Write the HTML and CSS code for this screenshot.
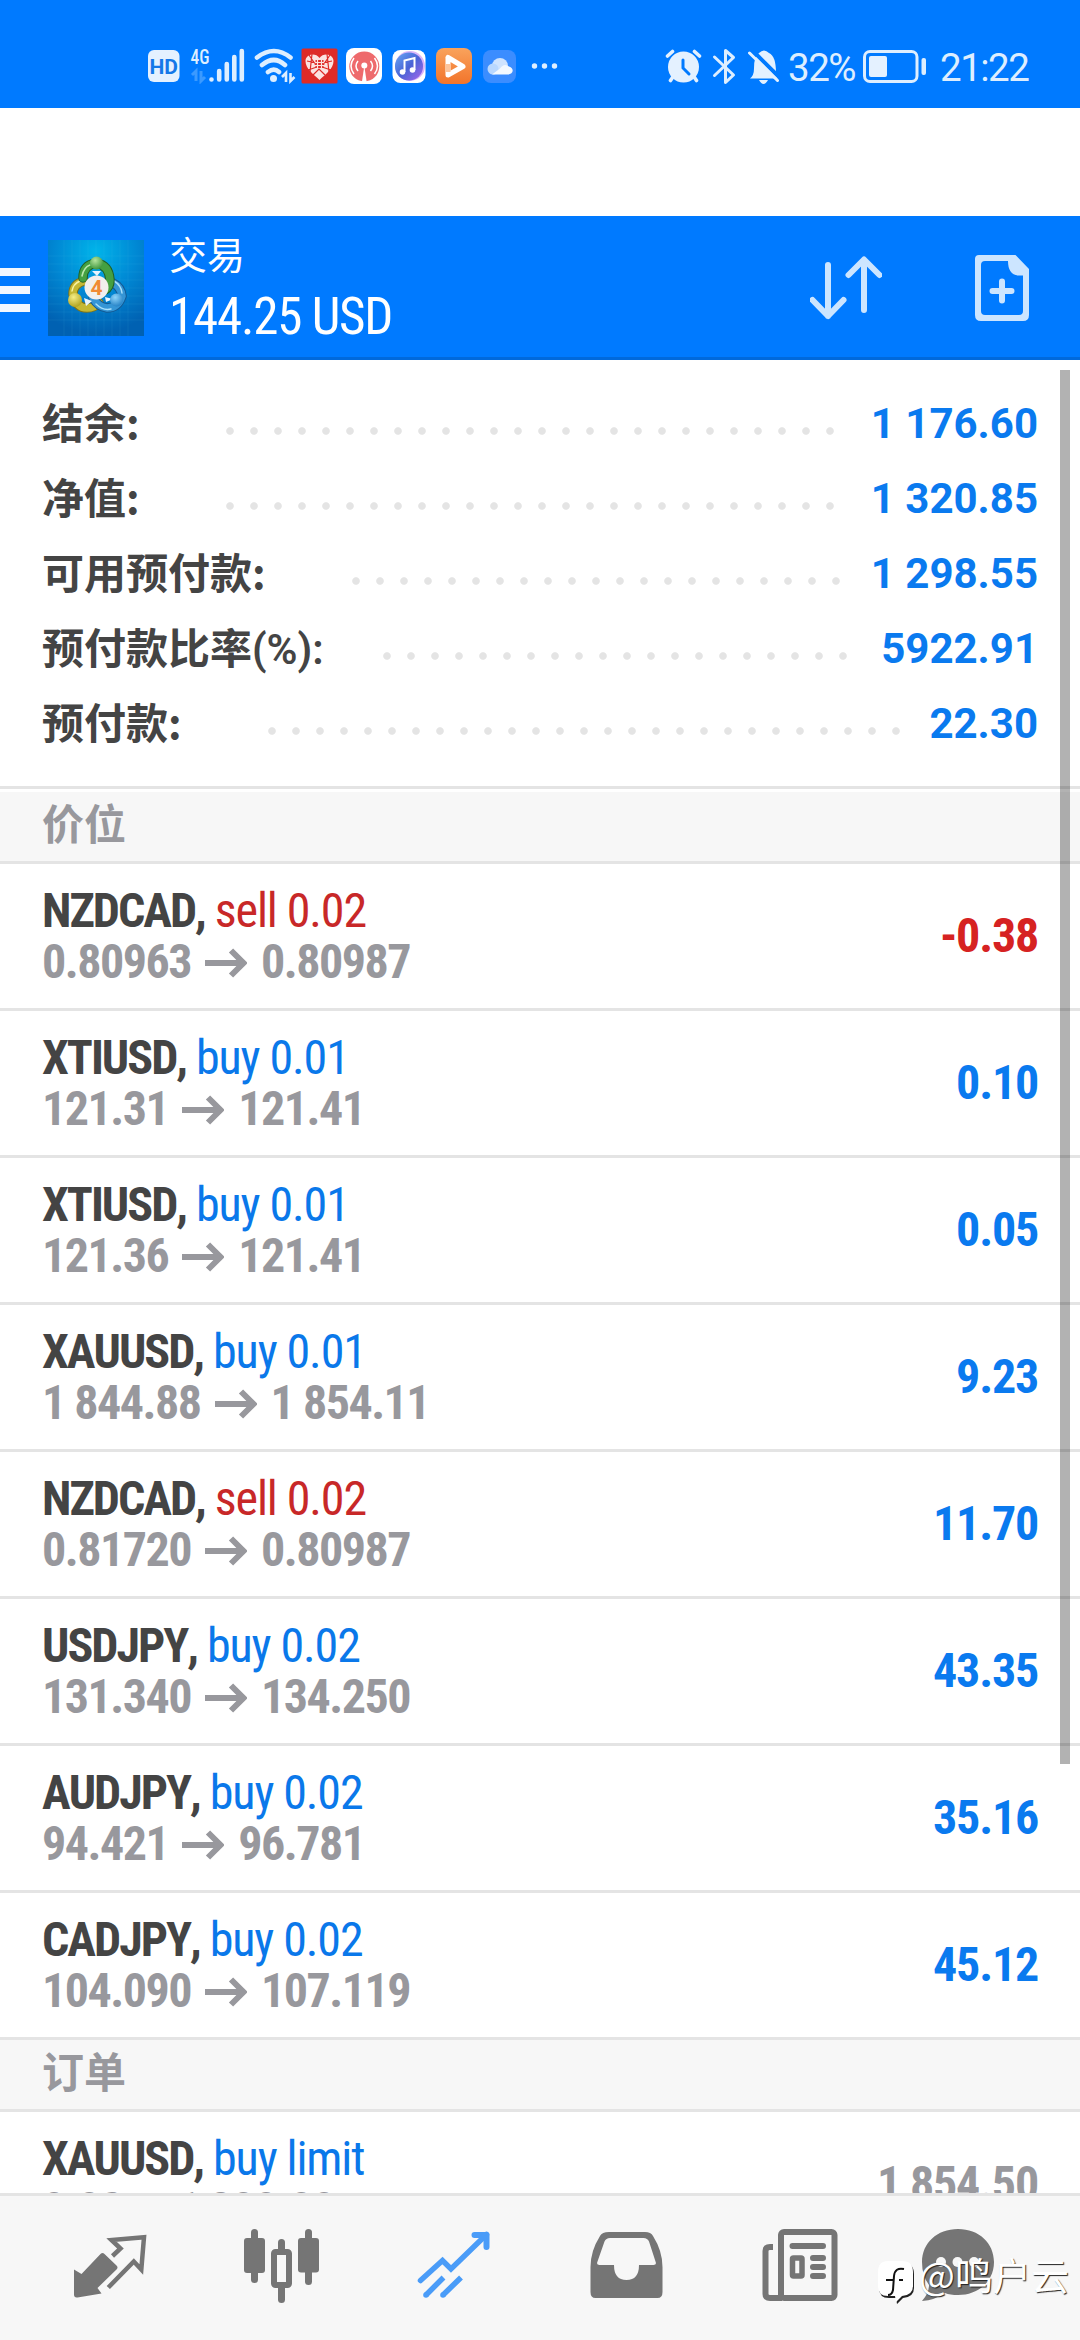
FILE: index.html
```html
<!DOCTYPE html>
<html lang="zh-CN">
<head>
<meta charset="utf-8">
<title>交易</title>
<link rel="stylesheet" href="styles.css">
</head>
<body>
<div class="phone">
  <div class="status">
    <div class="status-left">
      <svg width="38" height="36" viewBox="148 48 38 36"><rect x="148" y="50" width="31.500" height="32" rx="6" fill="#e4f1ff"/><text x="163.700" y="74" text-anchor="middle" class="hd">HD</text></svg>
      <svg width="64" height="36" viewBox="186 48 64 36"><text x="190.500" y="64" class="g4" textLength="19" lengthAdjust="spacingAndGlyphs">4G</text><path d="M192 75l4-4v10M201 71v10l4-4" fill="none" stroke="#3b9aff" stroke-width="3"/><path d="M211.500 79.500v0M219.200 71v8.500M226.800 64v15.500M234.300 57v22.500M241.800 51v28.500" stroke="#def" stroke-width="4.600" stroke-linecap="round"/></svg>
      <svg width="49" height="36" viewBox="250 48 49 36"><g fill="none" stroke="#def" stroke-width="4.600" stroke-linecap="round"><path d="M257 57.500Q274 44.500 290.500 57.500M262 65Q274 55 285 65M268 72Q274 67.500 279 72"/></g><circle cx="273.500" cy="78.500" r="3.500" fill="#def"/><path d="M282 77l4-4v9M290.500 73v8l4-4" fill="none" stroke="#def" stroke-width="2.600"/></svg>
      <svg width="44" height="36" viewBox="299 48 44 36"><rect x="301.500" y="48.500" width="36" height="35" rx="1.500" fill="#de2b27"/><path d="M319.500 58c-4-6-14-4-14 3 0 8 8 13 14 19 6-6 14-11 14-19 0-7-10-9-14-3z" fill="#fbe3e0"/><path d="M309 55l8 12-9 3M330 55l-8 12 9 3M307 61l9 2M332 61l-9 2M313 75l6-6 6 6M312 54l-2 18M327 54l2 18" fill="none" stroke="#de2b27" stroke-width="1.200"/><path d="M315.500 60h8v8h-8z" fill="#de2b27"/><path d="M317.500 60v8M321.500 60v8M315 62.500h9M315 65.500h9" stroke="#fbe3e0" stroke-width="1.200"/></svg>
      <svg width="44" height="36" viewBox="343 48 44 36"><rect x="346" y="48" width="36" height="36" rx="8" fill="#fff"/><circle cx="364.300" cy="66.500" r="15" fill="#ee6a6c"/><path d="M358 61q-4 5 0 10M370.500 61q4 5 0 10M354 58q-6 8 0 16M374.500 58q6 8 0 16" fill="none" stroke="#fff" stroke-width="1.500"/><circle cx="364.300" cy="65.500" r="3" fill="#fff"/><path d="M364.300 66l2.700 18h-5.400z" fill="#fff"/></svg>
      <svg width="44" height="36" viewBox="387 48 44 36"><defs><linearGradient id="m" x1="0" y1="0" x2="1" y2="1"><stop offset="0" stop-color="#69aaf5"/><stop offset=".5" stop-color="#4963d6"/><stop offset="1" stop-color="#a868ec"/></linearGradient></defs><rect x="392.500" y="50" width="33" height="33" rx="8" fill="#fff"/><circle cx="410" cy="66" r="15" fill="#dab5fa"/><circle cx="409" cy="66.500" r="14" fill="url(#m)"/><path d="M404.500 72V60.500l10-2.500v12" fill="none" stroke="#fff" stroke-width="2"/><circle cx="402.500" cy="72" r="2.800" fill="#fff"/><circle cx="412.500" cy="70" r="2.800" fill="#fff"/></svg>
      <svg width="46" height="36" viewBox="431 48 46 36"><defs><linearGradient id="o" x1="0" y1="0" x2="0" y2="1"><stop offset="0" stop-color="#f9a35c"/><stop offset="1" stop-color="#f2742b"/></linearGradient></defs><rect x="436" y="48" width="36" height="36" rx="8" fill="url(#o)"/><path d="M448 58v17l15-8.500-15-9" fill="none" stroke="#fff" stroke-width="5" stroke-linejoin="round" stroke-linecap="round"/><path d="M448 64v8" stroke="#fcc49b" stroke-width="5"/></svg>
      <svg width="46" height="36" viewBox="477 48 46 36"><rect x="483" y="50" width="33" height="33" rx="8" fill="#3b8dff"/><circle cx="500" cy="66" r="8" fill="#cfe4ff"/><circle cx="493" cy="69" r="5.500" fill="#b9d8ff"/><path d="M492 74.500l8-6q4-6 9-2c6 2 4 8-1 8z" fill="#f3f9ff"/></svg>
      <svg width="44" height="36" viewBox="523 48 44 36"><path d="M534.500 66v0M544.500 66v0M554.500 66v0" stroke="#def" stroke-width="5.400" stroke-linecap="round"/></svg>
    </div>
    <div class="status-right">
      <svg width="43" height="38" viewBox="665 47 43 38"><circle cx="683.500" cy="67" r="15.500" fill="#e4f1ff"/><path d="M683 60v8l6 6" fill="none" stroke="#007aff" stroke-width="3" stroke-linecap="round"/><path d="M667.500 56l5-4.500M699.500 56l-5-4.500M670.500 80.500l2-3M696.500 80.500l-2-3" stroke="#e4f1ff" stroke-width="3.600" stroke-linecap="round"/></svg>
      <svg width="35" height="38" viewBox="708 47 35 38"><path d="M714.500 57l19 18-8 7.500V50.500l8 7-19 18" fill="none" stroke="#def" stroke-width="3" stroke-linejoin="round" stroke-linecap="round"/></svg>
      <svg width="45" height="38" viewBox="743 47 45 38"><path d="M750 78.500q4-3 4-10 0-13 5-15.500 5-5 10 0 7 3 7 20l3 5.500z" fill="#e4f1ff"/><path d="M759 80h9q-4.500 8-9 0z" fill="#e4f1ff"/><path d="M752 50l29 29" stroke="#007aff" stroke-width="4"/><path d="M749.500 53l28 27.500" stroke="#e4f1ff" stroke-width="3" stroke-linecap="round"/></svg>
      <span class="battery-text">32%</span>
      <svg width="70" height="38" viewBox="860 47 70 38"><rect x="864.500" y="51.500" width="52.500" height="30" rx="5.500" fill="none" stroke="#def" stroke-width="3"/><rect x="869" y="56" width="18" height="21" rx="2" fill="#e4f1ff"/><rect x="921.500" y="58" width="4.500" height="17" rx="2" fill="#def"/></svg>
      <span class="clock">21:22</span>
    </div>
  </div>

  <header class="header">
    <div class="burger"><i></i><i></i><i></i></div>
    <svg class="logo" width="96" height="96" viewBox="0 0 96 96">
      <defs>
        <radialGradient id="bg" cx=".5" cy=".12" r=".85"><stop offset="0" stop-color="#00b4ea"/><stop offset=".5" stop-color="#0088d4"/><stop offset="1" stop-color="#0061b2"/></radialGradient>
        <radialGradient id="gr" cx=".4" cy=".3" r=".8"><stop offset="0" stop-color="#b4e59c"/><stop offset="1" stop-color="#2f8b31"/></radialGradient>
        <radialGradient id="ye" cx=".4" cy=".3" r=".8"><stop offset="0" stop-color="#f6ee85"/><stop offset="1" stop-color="#a89a16"/></radialGradient>
        <radialGradient id="bl" cx=".4" cy=".3" r=".8"><stop offset="0" stop-color="#8fd4fa"/><stop offset="1" stop-color="#1878c0"/></radialGradient>
      </defs>
      <rect width="96" height="96" fill="url(#bg)"/>
      <path d="M16 0v96M24 0v96M32 0v96M40 0v96M48 0v96M56 0v96M64 0v96M72 0v96M80 0v96M0 16h96M0 24h96M0 32h96M0 40h96M0 48h96M0 56h96M0 64h96M0 72h96M0 80h96" stroke="#5cc8f5" stroke-opacity=".1"/>
      <g stroke-linecap="round" fill="none">
        <path d="M36 41q-11 3-11 13 3 14 14 14 7 0 12-5" stroke="#7f741a" stroke-width="9.500"/><path d="M36 41q-11 3-11 13 3 14 14 14 7 0 12-5" stroke="#c5b833" stroke-width="7.500"/><path d="M24 51q1-7 8-10" stroke="#f8f2a0" stroke-width="1.500"/>
        <path d="M65 43q8 4 9 13-4 12-15 12-9-1-14-10" stroke="#145a94" stroke-width="9.500"/><path d="M65 43q8 4 9 13-4 12-15 12-9-1-14-10" stroke="#3595d5" stroke-width="7.500"/><path d="M66 41q7 4 8 12M48 64q7 7 15 5" stroke="#a9e0fb" stroke-width="1.500"/>
        <path d="M35 38q0-13 13-15 13 2 14 17 0 7-5 10" stroke="#205f25" stroke-width="9.500"/><path d="M35 38q0-13 13-15 13 2 14 17 0 7-5 10" stroke="#45a041" stroke-width="7.500"/><path d="M34 36q2-9 8-11" stroke="#bbe8ae" stroke-width="1.500"/>
      </g>
      <path d="M36 58l8 3-6 5zM57 57l8 2-7 3zM44 31h9l-4 5z" fill="#e6f4ff"/>
      <circle cx="48.500" cy="23" r="6.500" fill="url(#gr)"/><circle cx="27" cy="60" r="7" fill="url(#ye)"/><circle cx="68.500" cy="60" r="6.500" fill="url(#bl)"/>
      <circle cx="48.500" cy="47.500" r="12" fill="#f1efed"/><text x="48.500" y="55" text-anchor="middle" class="logo-num">4</text>
    </svg>
    <div class="titles"><h1>交易</h1><p>144.25 USD</p></div>
    <svg class="act" width="72" height="72" viewBox="810 252 72 72"><g fill="none" stroke="#cce5ff" stroke-width="6" stroke-linecap="round" stroke-linejoin="round"><path d="M828 265v51M812.500 300l15.500 16 15.500-16M864 310v-48M848.500 275l15.500-15.500 15.500 15.500"/></g></svg>
    <svg class="act-new" width="60" height="72" viewBox="972 252 60 72"><path d="M979 255h36.500l13.500 14v46q0 6-6 6h-42q-6 0-6-6v-56q0-4 4-4zM985 261q-4 0-4 4v46q0 4 4 4h34q4 0 4-4v-35.500h-5q-10-1-10-14.500z" fill="#cce5ff" fill-rule="evenodd"/><path d="M992.500 291h19M1002 281.500v19" stroke="#cce5ff" stroke-width="6" stroke-linecap="round"/></svg>
  </header>

  <main class="content">
    <section class="account">
      <div class="line"><span class="label">结余:</span><span class="dots" style="width:624px"></span><b>1 176.60</b></div>
      <div class="line"><span class="label">净值:</span><span class="dots" style="width:624px"></span><b>1 320.85</b></div>
      <div class="line"><span class="label">可用预付款:</span><span class="dots" style="width:504px"></span><b>1 298.55</b></div>
      <div class="line"><span class="label ratio">预付款比率<em>(%):</em></span><span class="dots" style="width:480px"></span><b>5922.91</b></div>
      <div class="line"><span class="label">预付款:</span><span class="dots" style="width:648px"></span><b>22.30</b></div>
    </section>
    <h2 class="section first">价位</h2>
    <div class="row"><div class="info"><p><b>NZDCAD,</b> <span class="sell">sell 0.02</span></p><p class="price">0.80963<svg class="arrow" viewBox="0 0 42 30"><path d="M0 15h38M26 2.500L38.500 15 26 27.500"/></svg>0.80987</p></div><span class="profit neg">-0.38</span></div>
    <div class="row"><div class="info"><p><b>XTIUSD,</b> <span class="buy">buy 0.01</span></p><p class="price">121.31<svg class="arrow" viewBox="0 0 42 30"><path d="M0 15h38M26 2.500L38.500 15 26 27.500"/></svg>121.41</p></div><span class="profit">0.10</span></div>
    <div class="row"><div class="info"><p><b>XTIUSD,</b> <span class="buy">buy 0.01</span></p><p class="price">121.36<svg class="arrow" viewBox="0 0 42 30"><path d="M0 15h38M26 2.500L38.500 15 26 27.500"/></svg>121.41</p></div><span class="profit">0.05</span></div>
    <div class="row"><div class="info"><p><b>XAUUSD,</b> <span class="buy">buy 0.01</span></p><p class="price">1 844.88<svg class="arrow" viewBox="0 0 42 30"><path d="M0 15h38M26 2.500L38.500 15 26 27.500"/></svg>1 854.11</p></div><span class="profit">9.23</span></div>
    <div class="row"><div class="info"><p><b>NZDCAD,</b> <span class="sell">sell 0.02</span></p><p class="price">0.81720<svg class="arrow" viewBox="0 0 42 30"><path d="M0 15h38M26 2.500L38.500 15 26 27.500"/></svg>0.80987</p></div><span class="profit">11.70</span></div>
    <div class="row"><div class="info"><p><b>USDJPY,</b> <span class="buy">buy 0.02</span></p><p class="price">131.340<svg class="arrow" viewBox="0 0 42 30"><path d="M0 15h38M26 2.500L38.500 15 26 27.500"/></svg>134.250</p></div><span class="profit">43.35</span></div>
    <div class="row"><div class="info"><p><b>AUDJPY,</b> <span class="buy">buy 0.02</span></p><p class="price">94.421<svg class="arrow" viewBox="0 0 42 30"><path d="M0 15h38M26 2.500L38.500 15 26 27.500"/></svg>96.781</p></div><span class="profit">35.16</span></div>
    <div class="row"><div class="info"><p><b>CADJPY,</b> <span class="buy">buy 0.02</span></p><p class="price">104.090<svg class="arrow" viewBox="0 0 42 30"><path d="M0 15h38M26 2.500L38.500 15 26 27.500"/></svg>107.119</p></div><span class="profit">45.12</span></div>
    <h2 class="section">订单</h2>
    <div class="row"><div class="info"><p><b>XAUUSD,</b> <span class="buy">buy limit</span></p><p class="price">0.02 at 1 800.00</p></div><span class="profit pending">1 854.50</span></div>
    <div class="scrollbar"></div>
  </main>

  <nav class="tabs">
    <svg viewBox="23 2196 173 144"><path d="M74 2269.500l7.500 4.500 19-20q2-2 4 0l12 11.500q2 2 0 4l-19 18.500 4 5.500-24 4q-3.500.500-3.500-3z" fill="#757575"/><path d="M112.500 2256l8-7.500-9-8.500 32.500-2.800-2.700 32.300-7.500-8-25.500 26" fill="none" stroke="#757575" stroke-width="4.500"/></svg>
    <svg viewBox="196 2196 173 144"><g fill="#757575"><rect x="244" y="2238" width="21" height="35" rx="3"/><rect x="251" y="2229" width="7" height="54" rx="3.500"/><rect x="298" y="2238" width="21" height="34.500" rx="3"/><rect x="305" y="2229" width="7" height="56" rx="3.500"/><rect x="278" y="2239" width="7" height="14" rx="3.500"/><rect x="278" y="2284" width="7" height="19" rx="3.500"/></g><rect x="274" y="2252" width="15" height="33" rx="1.500" fill="none" stroke="#757575" stroke-width="6"/></svg>
    <svg viewBox="369 2196 173 144"><g fill="none" stroke="#4a9cf8"><path d="M420.500 2280.500l22-20 8.500 8.500 35.500-34.500" stroke-width="5.500" stroke-linecap="round"/><path d="M474.500 2235h12v12" stroke-width="6" stroke-linecap="round" stroke-linejoin="round"/><path d="M426 2295l17.500-17.500M443 2295l18-17.500" stroke-width="5.500"/></g><circle cx="426" cy="2295" r="2.800" fill="#4a9cf8"/><circle cx="443" cy="2295" r="2.800" fill="#4a9cf8"/></svg>
    <svg viewBox="542 2196 173 144"><path d="M609 2232h36q6 0 8 4 9.500 15 9.500 31v25q0 6-5 6h-62q-5 0-5-6v-25q0-16 9.500-31 2-4 9-4zM610 2238q-4 0-5.500 3.500l-7 20q-1.500 3.500 2 3.500h14.500q0 15 12.500 15 12.500 0 12.500-15h14.500q3.500 0 2-3.500l-6.500-20q-1.500-3.500-5.500-3.500z" fill="#757575" fill-rule="evenodd"/></svg>
    <svg viewBox="715 2196 173 144"><g fill="none" stroke="#757575"><rect x="781" y="2232" width="53.500" height="66" rx="3" stroke-width="6"/><path d="M773 2247h-3q-4.500 0-4.500 4v43q0 4 4.500 4h12" stroke-width="6"/><path d="M792.500 2246h30.500M813 2258h10M813 2267h10M813 2276h10" stroke-width="6" stroke-linecap="round"/><rect x="792.500" y="2258" width="9.500" height="18" rx="1" stroke-width="5.500"/></g></svg>
    <svg viewBox="888 2196 173 144"><path d="M958 2229c21 0 36 14 36 33s-15 33-36 33q-8 0-13-2-10 7-23 8 7-8 7-16-7-9-7-23c0-19 15-33 36-33z" fill="#757575"/><g fill="#f7f7f7"><circle cx="941" cy="2262" r="5"/><circle cx="957.500" cy="2262" r="5"/><circle cx="974" cy="2262" r="5"/></g></svg>
  </nav>

  <div class="watermark">
    <svg width="40" height="46" viewBox="0 0 40 46"><path d="M13 3h14q11 0 11 11v14q0 9-11 10l-6 6-1-6h-7q-10 0-10-10V14Q3 3 13 3z" fill="#222"/><path d="M12 1h14q11 0 11 11v14q0 9-11 10l-6 6-1-6h-7Q2 36 2 26V12Q2 1 12 1z" fill="#fff"/><path d="M28 9q-9-2-10 7l-1 14q-1 5-5 5M10 20h8M23 20h4" fill="none" stroke="#111" stroke-width="2"/></svg>
    <span>@鸣户云</span>
  </div>
</div>
</body>
</html>
```
FILE: styles.css
```css
* { box-sizing: border-box; }
body, h1, h2, p { margin: 0; }
body { background: #fff; font-family: Roboto, "Noto Sans CJK SC", sans-serif; }
svg { display: block; flex: none; }

.phone { position: relative; width: 1080px; height: 2340px; overflow: hidden; display: flex; flex-direction: column; }

/* system status bar */
.status { height: 108px; flex: none; background: #007aff; display: flex; justify-content: space-between; padding: 0 52px 0 148px; color: #def; margin-bottom: 108px; }
.status-left { display: flex; padding-top: 48px; }
.status-right { display: flex; padding-top: 49px; height: 87px; align-items: center; font-size: 38.500px; line-height: 38px; letter-spacing: -1.500px; }
.status-right svg { margin-top: -4px; }
.battery-text { width: 72px; }
.clock { width: 88px; margin-left: 10px; }
.hd { font: 700 21px Roboto, sans-serif; fill: #1478e8; }
.g4 { font: 500 20px "Roboto Condensed", Roboto, sans-serif; fill: #def; }

/* application header */
.header { height: 144px; flex: none; background: #007aff; border-bottom: 3px solid #0069dc; display: flex; align-items: flex-start; padding-top: 24px; color: #fff; }
.burger { width: 30px; display: flex; flex-direction: column; gap: 10px; margin-top: 28px; }
.burger i { height: 8px; background: #f2f8ff; }
.logo { margin-left: 18px; }
.logo-num { font: 700 21px Roboto, sans-serif; fill: #f08a33; }
.titles { margin-left: 25px; width: 300px; margin-top: -14px; }
.titles h1 { font: 400 38px/54px "Noto Sans CJK SC", sans-serif; }
.titles p { font: 400 51px/60px "Roboto Condensed", Roboto, sans-serif; letter-spacing: -1.200px; margin-top: 7px; }
.act { margin: 12px 0 0 341px; }
.act-new { margin: 12px 0 0 90px; }

/* scrolling content */
.content { position: relative; flex: 1; min-height: 0; overflow: hidden; }
.account { padding: 26px 42px 25px; }
.line { height: 75px; display: flex; align-items: flex-start; }
.label { font: 700 42px/69px "Noto Sans CJK SC", sans-serif; color: #444; }
.label em { font: 600 42px Roboto, sans-serif; }
.dots { height: 75px; margin-left: 78px; background: radial-gradient(circle at 12px 45px, #e4e4e4 3.300px, transparent 4.300px) 0 0 / 24px 75px repeat-x; }
.ratio + .dots { margin-left: 51px; }
.line b { margin-left: auto; font: 700 42px/75px Roboto, sans-serif; color: #0a7aef; }
.section { height: 72px; border: solid #e4e4e4; border-width: 0 0 3px; background: #f7f7f7; padding-left: 42px; font: 700 42px/59px "Noto Sans CJK SC", sans-serif; color: #98989d; }
.section.first { height: 78px; border-top-width: 3px; padding-top: 3px; box-shadow: inset 0 3px #fff; }
.row { height: 147px; border-bottom: 3px solid #e4e4e4; padding: 0 42px; display: flex; justify-content: space-between; font: 400 48px/51px "Roboto Condensed", Roboto, sans-serif; letter-spacing: -1.100px; }
.info { padding-top: 21px; white-space: nowrap; }
.info b { color: #444; letter-spacing: -2px; font-kerning: none; }
.sell { color: #c82828; }
.buy { color: #0a78ea; }
.price { font-weight: 700; color: #98989d; display: flex; align-items: center; letter-spacing: -1.500px; }
.arrow { width: 42px; height: 30px; margin: 2px 14px 0 14px; fill: none; stroke: #98989d; stroke-width: 6; }
.profit { font-weight: 700; line-height: 144px; color: #0a7aef; letter-spacing: -1.200px; }
.neg { color: #d62222; }
.pending { color: #98989d; }
.scrollbar { position: absolute; left: 1060px; top: 10px; width: 10px; height: 1394px; background: rgba(0, 0, 0, .3); }

/* bottom tabs */
.tabs { height: 147px; flex: none; border-top: 3px solid #e4e4e4; background: #f7f7f7; display: flex; padding-left: 23px; }
.tabs svg { width: 173px; height: 144px; }

.watermark { position: absolute; left: 876px; top: 2260px; display: flex; align-items: flex-start; color: #fff; font: 400 38px/40px "Noto Sans CJK SC", sans-serif; text-shadow: 1px 1px 1px #222; }
.watermark span { margin-left: 3px; margin-top: -6px; }
```
